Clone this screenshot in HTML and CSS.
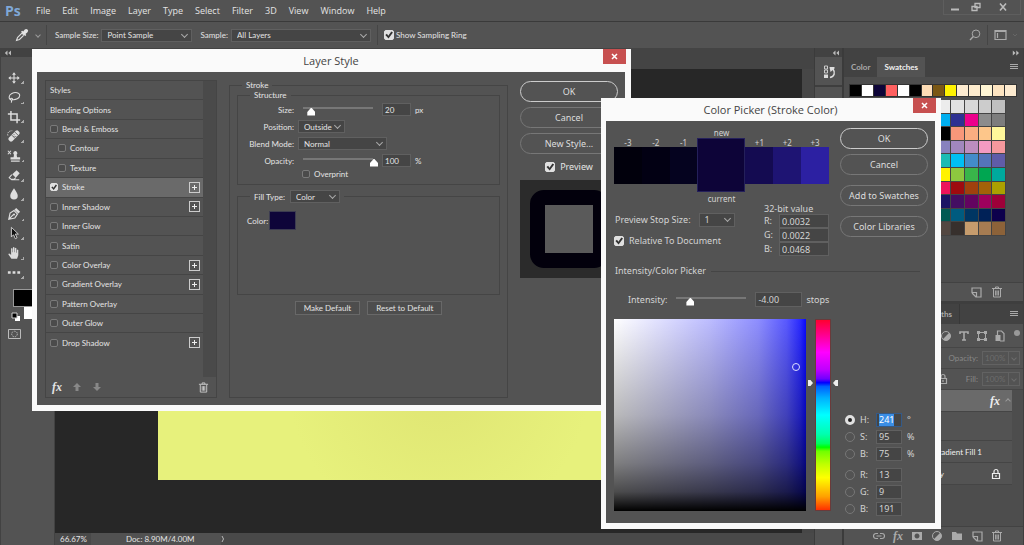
FILE: index.html
```html
<!DOCTYPE html>
<html lang="en">
<head>
  <meta charset="utf-8">
  <title>Photoshop - Layer Style</title>
  <link rel="stylesheet" href="styles.css">
</head>
<body>
  <!-- Shared icons -->
  <svg class="defs" width="0" height="0">
    <symbol id="trash" viewBox="0 0 12 12"><path d="M1 2.5h10M4.5 2.5V1h3v1.500M2.500 3v8h7V3M4.600 4.500v5M6 4.500v5M7.400 4.500v5" fill="none" stroke="currentColor"/></symbol>
    <symbol id="page" viewBox="0 0 12 12"><path d="M2 2h9v9H6.500V6.500H2zM2 7l4 4" fill="none" stroke="currentColor" stroke-width="1.200"/></symbol>
    <symbol id="menu" viewBox="0 0 10 8"><path d="M1 1.500h8M1 3.500h8M1 5.500h8" stroke="currentColor" stroke-width="1"/></symbol>
    <symbol id="lock" viewBox="0 0 12 12"><path d="M4 5.500V3.500a2 2 0 0 1 4 0v2M2.500 5.500h7v5h-7zM6 7v2" fill="none" stroke="currentColor" stroke-width="1.200"/></symbol>
    <symbol id="half" viewBox="0 0 12 12"><circle cx="6" cy="6" r="4.500" fill="none" stroke="currentColor"/><path d="M9.200 2.800A4.500 4.500 0 1 1 2.800 9.200z" fill="currentColor"/></symbol>
    <symbol id="left" viewBox="0 0 8 6"><path d="M3.500 .5v5L.8 3zM7 .5v5L4.300 3z" fill="currentColor"/></symbol>
    <symbol id="right" viewBox="0 0 8 6"><path d="M.8 .5v5L3.500 3zM4.300 .5v5L7 3z" fill="currentColor"/></symbol>
  </svg>

  <div class="app">
    <header class="menubar">
      <span class="logo">Ps</span>
      <nav class="menus">
        <a href="#">File</a>
        <a href="#">Edit</a>
        <a href="#">Image</a>
        <a href="#">Layer</a>
        <a href="#">Type</a>
        <a href="#">Select</a>
        <a href="#">Filter</a>
        <a href="#">3D</a>
        <a href="#">View</a>
        <a href="#">Window</a>
        <a href="#">Help</a>
      </nav>
      <div class="window-buttons">
        <button aria-label="Minimize"><svg width="10" height="10"><path d="M1 7.500h8" stroke="currentColor" stroke-width="2"/></svg></button>
        <button aria-label="Restore"><svg width="10" height="10"><path d="M4 1.500h5v4H4zM1 4.500h5v4H1z" fill="none" stroke="currentColor" stroke-width="1.300"/></svg></button>
        <button class="wide" aria-label="Close"><svg width="10" height="10"><path d="M2 1.500l6 7M8 1.500l-6 7" stroke="currentColor" stroke-width="1.600"/></svg></button>
      </div>
    </header>

    <div class="options">
      <svg class="eyedropper" width="14" height="14" viewBox="0 0 14 14"><path d="M1.500 12.500l1-3 4.500-4.500 2 2-4.500 4.500z" fill="none" stroke="#ddd" stroke-width="1.100"/><path d="M6 3.800l1.200-1 1 .8 1.600-2a1.900 1.900 0 0 1 2.700 2.700l-2 1.600.8 1-1 1.200z" fill="#e6e6e6"/></svg>
      <span class="chevron"></span>
      <span class="divider"></span>
      <label for="sampleSize">Sample Size:</label>
      <span class="select sample-size"><select id="sampleSize"><option>Point Sample</option></select></span>
      <label for="sample">Sample:</label>
      <span class="select sample"><select id="sample"><option>All Layers</option></select></span>
      <span class="divider"></span>
      <label class="check"><input type="checkbox" checked>Show Sampling Ring</label>
      <div class="options-right">
        <svg width="12" height="12" viewBox="0 0 12 12"><circle cx="7" cy="4.800" r="3.800" fill="none" stroke="#aaa"/><path d="M4.300 7.500L1 11" stroke="#aaa" stroke-width="1.300"/></svg>
        <span class="divider"></span>
        <svg width="24" height="12" viewBox="0 0 24 12"><path d="M1 1.500h11v9H1zM1 2.500h11M3.500 4v5" fill="none" stroke="#aaa" stroke-width="1.200"/><path d="M19 5l2 2 2-2" fill="none" stroke="#666"/></svg>
      </div>
    </div>

    <main class="workspace">
      <aside class="toolbar">
        <div class="strip"><svg width="8" height="6"><use href="#left"/></svg></div>
        <div class="tools">
          <button aria-label="Move"><svg viewBox="0 0 16 16"><path d="M8 3v10M3 8h10" stroke="currentColor" stroke-width="1.200"/><path d="M8 1.500l2.200 2.700H5.800zM8 14.500l2.200-2.700H5.800zM1.500 8l2.700-2.200v4.400zM14.500 8l-2.700-2.200v4.400z" fill="currentColor"/></svg></button>
          <button aria-label="Lasso"><svg viewBox="0 0 16 16"><path d="M5 11.500C1.500 10.500 1.500 6 5.500 4s9-1 9 2.300-4.500 5.200-8.500 4.700M4 10.500c0-1.500 2.500-1.200 2.300.3-.2 1.200-2.300 1.200-2.300-.3zM5 11.800c.5 1 .5 1.700-.3 2.700" fill="none" stroke="currentColor" stroke-width="1.200"/></svg></button>
          <button aria-label="Crop"><svg viewBox="0 0 16 16"><path d="M4.500 1v10.500H15M1 4.500h10.500V15" fill="none" stroke="currentColor" stroke-width="1.700"/></svg></button>
          <button aria-label="Healing Brush"><svg viewBox="0 0 16 16"><path d="M2 10l8-8q1.800-1 3 .3l1 1q1.200 1.200 0 2.700l-8 8q-1.500 1-2.700 0l-1.300-1.300Q.9 11.500 2 10z" fill="currentColor"/><path d="M5.500 7l4 4M9 3.500l4 4" stroke="#535353"/><path d="M8 6v1M10 8v1M7.500 8.500h1" stroke="#535353"/><path d="M1 7.500C0 4.500 2 2 6 2" fill="none" stroke="currentColor" stroke-dasharray="1.500 1.200"/></svg></button>
          <button aria-label="Clone Stamp"><svg viewBox="0 0 16 16"><path d="M7.500 9.500L8 6.500a2.300 2.300 0 1 1 3 0l.5 3H15v2.500H4V9.500zM4.500 13h10v1.500h-10z" fill="currentColor"/><path d="M1 2l3.500 4M4.500 2L1 6" stroke="currentColor" stroke-width="1.200"/></svg></button>
          <button aria-label="Eraser"><svg viewBox="0 0 16 16"><path d="M6 7l5-4.500 3.500 3.500-4.500 5z" fill="currentColor"/><path d="M5.500 7.500L2.500 11l2.500 2h3l2-2M5 13.500h9" fill="none" stroke="currentColor" stroke-width="1.200"/></svg></button>
          <button aria-label="Blur"><svg viewBox="0 0 16 16"><path d="M8 1.500c2 3.500 4.300 5.700 4.300 8.500a4.300 4.300 0 0 1-8.600 0C3.700 7.200 6 5 8 1.500z" fill="currentColor"/></svg></button>
          <button aria-label="Pen"><svg viewBox="0 0 16 16"><path d="M2 14l1.500-7L8 4l4 4-3 4.500zM2 14l5.500-5.500" fill="none" stroke="currentColor" stroke-width="1.300"/><circle cx="8" cy="8.500" r="1.200" fill="currentColor"/><path d="M8.500 3l2-2 4.500 4.500-2 2z" fill="currentColor"/></svg></button>
          <button aria-label="Path Selection"><svg viewBox="0 0 16 16"><path d="M5 1.500v11l2.500-2.500 2 4.500 2-1-2-4.300H13z" fill="#111" stroke="currentColor"/></svg></button>
          <button aria-label="Hand"><svg viewBox="0 0 16 16"><path d="M5 14.500L1.500 9.500q.5-1.500 2-.5l1.200 1.300V3q.8-1.200 1.600 0v4.200h.5V1.800q.9-1.200 1.700 0v5.400H9V2.500q.9-1.200 1.700 0v5.200h.6V4.500q.9-1 1.600 0v6l-1.400 4z" fill="currentColor"/></svg></button>
          <button aria-label="Edit Toolbar"><svg viewBox="0 0 16 16"><path d="M1 7h3.200v3H1zM6.400 7h3.200v3H6.400zM11.800 7H15v3h-3.200z" fill="currentColor"/></svg></button>
        </div>
        <div class="colors"><span class="back"></span><span class="front"></span></div>
        <svg class="mini" width="16" height="38" viewBox="0 0 16 38"><path d="M8 9h5v5H8z" fill="#fff"/><path d="M5 6h5v5H5z" fill="#000" stroke="#ccc"/><path d="M1.500 22.500h12v9h-12z" fill="none" stroke="#bbb"/><circle cx="7.500" cy="27" r="2.800" fill="none" stroke="#bbb" stroke-dasharray="1.500 1"/></svg>
      </aside>

      <section class="document">
        <div class="doc-tabs"></div>
        <div class="doc-view">
          <div class="canvas"><div class="artboard"></div></div>
          <div class="doc-scroll"></div>
        </div>
        <footer class="status">
          <span class="zoom">66.67%</span>
          <span class="doc-size">Doc: 8.90M/4.00M</span>
          <svg width="5" height="8"><path d="M1 1q3 3 0 6" fill="none" stroke="#bbb"/></svg>
        </footer>
      </section>

      <aside class="dock">
        <div class="strip"><svg width="8" height="6"><use href="#left"/></svg></div>
        <div class="dock-group">
          <button aria-label="History"><svg width="14" height="14" viewBox="0 0 14 14"><path d="M1.500 1h3v3h-3zM1.500 5h3v3h-3z" fill="none" stroke="#ccc"/><path d="M1 9.500h4V13H1z" fill="#ddd"/><path d="M7 12.500c4.500-1 5.500-5 3-8.500" fill="none" stroke="#ddd" stroke-width="1.500"/><path d="M6.500 2h5v1.500l-4 3.500z" fill="#ddd"/></svg></button>
        </div>
        <div class="dock-group"></div>
      </aside>

      <aside class="panels">
        <div class="strip end"><svg width="8" height="6"><use href="#right"/></svg></div>
        <section class="panel swatches">
          <div class="tabs">
            <button>Color</button>
            <button class="active">Swatches</button>
            <svg class="panel-menu" width="10" height="8"><use href="#menu"/></svg>
          </div>
          <div class="recent" id="recent"></div>
          <div class="swatch-grid" id="swatches"></div>
          <div class="panel-foot">
            <svg width="12" height="12"><use href="#page"/></svg>
            <svg width="12" height="12"><use href="#trash"/></svg>
          </div>
        </section>
        <section class="panel layers">
          <div class="tabs">
            <button class="paths">Paths</button>
            <svg class="panel-menu" width="10" height="8"><use href="#menu"/></svg>
          </div>
          <div class="layer-row filters">
            <svg width="12" height="12"><use href="#half"/></svg>
            <svg width="12" height="12" viewBox="0 0 12 12"><path d="M2 4V2h8v2M6 2v8M4 10h4" fill="none" stroke="currentColor" stroke-width="1.600"/></svg>
            <svg width="12" height="12" viewBox="0 0 12 12"><path d="M2.500 2.500h7v7h-7z" fill="none" stroke="currentColor"/><path d="M1 1h3v3H1zM8 1h3v3H8zM1 8h3v3H1zM8 8h3v3H8z" fill="currentColor"/></svg>
            <svg width="12" height="12" viewBox="0 0 12 12"><path d="M3.500 5V1h4L10 3.500V11H6" fill="none" stroke="currentColor" stroke-width="1.200"/><path d="M1.500 5h5v6h-5z" fill="currentColor"/></svg>
            <span class="dot"></span>
          </div>
          <div class="layer-row dim">
            <label for="layerOpacity">Opacity:</label>
            <span class="combo"><input id="layerOpacity" type="text" value="100%" disabled><span class="chevron"></span></span>
          </div>
          <div class="layer-row dim">
            <svg class="lock-icon" width="12" height="12"><use href="#lock"/></svg>
            <label for="layerFill">Fill:</label>
            <span class="combo"><input id="layerFill" type="text" value="100%" disabled><span class="chevron"></span></span>
          </div>
          <div class="layer-list">
            <div class="layer selected"><em>fx</em><span class="chevron up"></span></div>
            <div class="layer tall"></div>
            <div class="layer name"><span>Gradient Fill 1</span></div>
            <div class="layer locked"><span>Copy</span><svg width="12" height="12"><use href="#lock"/></svg></div>
          </div>
          <div class="panel-foot layer-foot">
            <svg width="12" height="12" viewBox="0 0 12 12"><path d="M5 3.500H3a2.500 2.500 0 0 0 0 5h2M7 3.500h2a2.500 2.500 0 0 1 0 5H7M3.500 6h5" fill="none" stroke="currentColor" stroke-width="1.200"/></svg>
            <em>fx</em>
            <svg width="12" height="12" viewBox="0 0 12 12"><path fill-rule="evenodd" d="M1 2h10v8H1zM6 3.500a2.500 2.500 0 1 0 .01 0z" fill="currentColor"/></svg>
            <svg width="12" height="12"><use href="#half"/></svg>
            <svg width="12" height="12" viewBox="0 0 12 12"><path d="M1 2h4l1 1.500h5V10H1z" fill="currentColor"/></svg>
            <svg width="12" height="12"><use href="#page"/></svg>
            <svg width="12" height="12"><use href="#trash"/></svg>
          </div>
        </section>
      </aside>
    </main>
  </div>

  <!-- Layer Style window -->
  <div class="window layer-style" role="dialog" aria-label="Layer Style">
    <div class="titlebar">
      <h1>Layer Style</h1>
      <button class="close" aria-label="Close"><svg width="7" height="7"><path d="M1 1l5 5M6 1L1 6" stroke="#fff" stroke-width="1.500"/></svg></button>
    </div>
    <div class="window-body style-body">
      <div class="style-panel">
        <div class="style-scroll">
          <div class="style-list">
            <div class="style-item">Styles</div>
            <div class="style-item">Blending Options</div>
            <div class="style-item"><label class="check"><input type="checkbox">Bevel &amp; Emboss</label></div>
            <div class="style-item sub"><label class="check"><input type="checkbox">Contour</label></div>
            <div class="style-item sub"><label class="check"><input type="checkbox">Texture</label></div>
            <div class="style-item selected"><label class="check"><input type="checkbox" checked>Stroke</label><button class="plus" aria-label="Add Stroke"></button></div>
            <div class="style-item"><label class="check"><input type="checkbox">Inner Shadow</label><button class="plus" aria-label="Add Inner Shadow"></button></div>
            <div class="style-item"><label class="check"><input type="checkbox">Inner Glow</label></div>
            <div class="style-item"><label class="check"><input type="checkbox">Satin</label></div>
            <div class="style-item"><label class="check"><input type="checkbox">Color Overlay</label><button class="plus" aria-label="Add Color Overlay"></button></div>
            <div class="style-item"><label class="check"><input type="checkbox">Gradient Overlay</label><button class="plus" aria-label="Add Gradient Overlay"></button></div>
            <div class="style-item"><label class="check"><input type="checkbox">Pattern Overlay</label></div>
            <div class="style-item"><label class="check"><input type="checkbox">Outer Glow</label></div>
            <div class="style-item"><label class="check"><input type="checkbox">Drop Shadow</label><button class="plus" aria-label="Add Drop Shadow"></button></div>
          </div>
        </div>
        <div class="style-foot">
          <em>fx</em>
          <svg width="10" height="10"><path d="M5 1l4 4H6.500v4h-3V5H1z" fill="#888"/></svg>
          <svg width="10" height="10"><path d="M5 9l4-4H6.500V1h-3v4H1z" fill="#888"/></svg>
          <svg class="end" width="11" height="11"><use href="#trash"/></svg>
        </div>
      </div>

      <fieldset class="stroke">
        <legend>Stroke</legend>
        <fieldset class="structure">
          <legend>Structure</legend>
          <div class="row">
            <label for="size">Size:</label>
            <input id="size" type="range" min="0" max="155" value="20">
            <input class="num" type="text" value="20" aria-label="Size value"> px
          </div>
          <div class="row">
            <label for="position">Position:</label>
            <span class="select position"><select id="position"><option>Outside</option></select></span>
          </div>
          <div class="row">
            <label for="blend">Blend Mode:</label>
            <span class="select blend"><select id="blend"><option>Normal</option></select></span>
          </div>
          <div class="row">
            <label for="opacity">Opacity:</label>
            <input id="opacity" type="range" min="0" max="100" value="100">
            <input class="num" type="text" value="100" aria-label="Opacity value"> %
          </div>
          <label class="check overprint"><input type="checkbox">Overprint</label>
        </fieldset>
        <fieldset class="fill">
          <legend><label for="fillType">Fill Type:</label> <span class="select fill-type"><select id="fillType"><option>Color</option></select></span></legend>
          <div class="fill-color">Color: <button class="color-chip" aria-label="Stroke color"></button></div>
        </fieldset>
        <div class="defaults">
          <button>Make Default</button>
          <button>Reset to Default</button>
        </div>
      </fieldset>

      <div class="style-actions">
        <button class="pill primary">OK</button>
        <button class="pill">Cancel</button>
        <button class="pill">New Style...</button>
        <label class="check big"><input type="checkbox" checked>Preview</label>
        <div class="preview"><div class="preview-ring"></div></div>
      </div>
    </div>
  </div>

  <!-- Color Picker window -->
  <div class="window color-picker" role="dialog" aria-label="Color Picker">
    <div class="titlebar">
      <h1>Color Picker (Stroke Color)</h1>
      <button class="close" aria-label="Close"><svg width="7" height="7"><path d="M1 1l5 5M6 1L1 6" stroke="#fff" stroke-width="1.500"/></svg></button>
    </div>
    <div class="window-body picker-body">
      <div class="picker-top">
        <div class="picker-preview">
          <div class="caption">new</div>
          <div class="stops">
            <div class="stop s1">-3</div>
            <div class="stop s2">-2</div>
            <div class="stop s3">-1</div>
            <div class="current"></div>
            <div class="stop s4">+1</div>
            <div class="stop s5">+2</div>
            <div class="stop s6">+3</div>
          </div>
          <div class="caption">current</div>
          <div class="picker-options">
            <div>
              <div class="stop-size">
                <label for="stopSize">Preview Stop Size:</label>
                <span class="select"><select id="stopSize"><option>1</option></select></span>
              </div>
              <label class="check big"><input type="checkbox" checked>Relative To Document</label>
            </div>
            <div class="bit-values">
              <div>32-bit value</div>
              <label>R: <input type="text" value="0.0032"></label>
              <label>G: <input type="text" value="0.0022"></label>
              <label>B: <input type="text" value="0.0468"></label>
            </div>
          </div>
        </div>
        <div class="picker-actions">
          <button class="pill primary">OK</button>
          <button class="pill">Cancel</button>
          <button class="pill spaced">Add to Swatches</button>
          <button class="pill spaced">Color Libraries</button>
        </div>
      </div>

      <div class="section-title">Intensity/Color Picker</div>
      <div class="intensity">
        <label for="intensity">Intensity:</label>
        <input id="intensity" type="range" min="-9" max="15" value="-4">
        <input class="num" type="text" value="-4.00" aria-label="Intensity value"> stops
      </div>

      <div class="picker-main">
        <div class="field"><span class="marker"></span></div>
        <div class="hue"></div>
        <div class="values">
          <div class="value"><input type="radio" name="channel" id="ch" checked><label for="ch">H:</label><input type="text" id="hueValue" value="241" aria-label="Hue"> °</div>
          <div class="value"><input type="radio" name="channel" id="cs"><label for="cs">S:</label><input type="text" value="95" aria-label="Saturation"> %</div>
          <div class="value"><input type="radio" name="channel" id="cv"><label for="cv">B:</label><input type="text" value="75" aria-label="Brightness"> %</div>
          <div class="value rgb"><input type="radio" name="channel" id="cr"><label for="cr">R:</label><input type="text" value="13" aria-label="Red"></div>
          <div class="value"><input type="radio" name="channel" id="cg"><label for="cg">G:</label><input type="text" value="9" aria-label="Green"></div>
          <div class="value"><input type="radio" name="channel" id="cb"><label for="cb">B:</label><input type="text" value="191" aria-label="Blue"></div>
        </div>
      </div>
    </div>
  </div>

  <script src="script.js"></script>
</body>
</html>
```

FILE: styles.css
```css
* {
  box-sizing: border-box;
}

body {
  margin: 0;
  background: #262626;
  color: #e4e4e4;
  font: 8px/10px Lato, "Noto Sans", sans-serif;
}

button,
input,
select {
  font: inherit;
  color: inherit;
  margin: 0;
  padding: 0;
}

button {
  background: none;
  border: none;
}

a {
  color: inherit;
  text-decoration: none;
}

svg {
  display: block;
  flex: none;
}

em {
  font: italic bold 12px/12px "Liberation Serif", serif;
}

.defs {
  position: absolute;
}

.app {
  display: flex;
  flex-direction: column;
  height: 100vh;
  overflow: hidden;
}

/* Menu bar */
.menubar {
  display: flex;
  align-items: center;
  height: 22px;
  padding: 0 3px 0 5px;
  background: #535353;
  border-bottom: 1px solid #3a3a3a;
  font: 9px/12px "Open Sans", sans-serif;
}

.logo {
  width: 31px;
  color: #7fa8d8;
  font-size: 14px;
  font-weight: bold;
}

.menus {
  display: flex;
  gap: 12px;
}

.window-buttons {
  display: flex;
  align-self: flex-start;
  margin-left: auto;
  border: 1px solid #5e5e5e;
  border-top: none;
  color: #bbb;
}

.window-buttons button {
  display: flex;
  justify-content: center;
  align-items: center;
  width: 21px;
  height: 14px;
}

.window-buttons .wide {
  width: 34px;
}

/* Form controls */
.select {
  position: relative;
  display: inline-block;
  height: 13px;
}

.select select {
  display: block;
  width: 100%;
  height: 100%;
  padding: 0 5px;
  appearance: none;
  background: #454545;
  border: 1px solid #606060;
}

.select::after {
  content: "";
  position: absolute;
  top: 3px;
  right: 5px;
  width: 4px;
  height: 4px;
  border: solid #aaa;
  border-width: 0 1px 1px 0;
  transform: rotate(45deg);
}

.chevron {
  width: 4px;
  height: 4px;
  border: solid #999;
  border-width: 0 1px 1px 0;
  transform: rotate(45deg);
}

.chevron.up {
  transform: rotate(225deg);
}

.check {
  display: flex;
  align-items: center;
  gap: 4px;
}

.check input {
  display: block;
  width: 8px;
  height: 8px;
  appearance: none;
  border: 1px solid #7a7a7a;
  border-radius: 2px;
  background: #4b4b4b;
}

.check input:checked {
  background: #e0e0e0;
  border-color: #e0e0e0;
}

.check input:checked::before {
  content: "";
  display: block;
  width: 100%;
  height: 100%;
  background: #333;
  clip-path: polygon(5% 50%, 25% 35%, 42% 58%, 80% 5%, 100% 20%, 45% 95%);
}

.check.big {
  gap: 5px;
}

.check.big input,
.options .check input {
  width: 10px;
  height: 10px;
}

input[type="text"] {
  background: #454545;
  border: 1px solid #606060;
  padding: 0 2px;
}

input[type="range"] {
  width: 80px;
  height: 12px;
  appearance: none;
  background: linear-gradient(#777, #777) 5px 3px / calc(100% - 10px) 2px no-repeat;
}

input[type="range"]::-webkit-slider-thumb {
  appearance: none;
  width: 8px;
  height: 8px;
  margin-top: 4px;
  background: #fff;
  clip-path: polygon(50% 0, 100% 55%, 100% 100%, 0 100%, 0 55%);
}

/* Options bar */
.options {
  display: flex;
  align-items: center;
  height: 26px;
  padding: 0 6px 0 15px;
  background: #535353;
}

.divider {
  width: 1px;
  height: 20px;
  background: #454545;
}

.options .chevron {
  margin: 0 6px 0 7px;
}

.options label {
  margin: 0 3px 0 8px;
}

.options .check {
  margin: 0 0 0 6px;
  gap: 2px;
}

.sample-size {
  width: 91px;
}

.sample {
  width: 140px;
  margin-right: 6px;
}

.options-right {
  display: flex;
  align-items: center;
  gap: 6px;
  margin-left: auto;
}

/* Workspace */
.workspace {
  display: flex;
  flex: 1;
  min-height: 0;
}

.strip {
  height: 9px;
  padding: 2px 3px;
  background: #424242;
  color: #bbb;
}

.strip.end {
  display: flex;
  justify-content: flex-end;
}

.toolbar {
  width: 55px;
  flex: none;
  background: #535353;
  border-left: 1px solid #424242;
  border-right: 1px solid #424242;
}

.tools {
  display: flex;
  flex-direction: column;
  width: 26px;
  height: 214px;
  margin-top: 11px;
  color: #ddd;
}

.tools button {
  flex: 1;
  display: flex;
  align-items: center;
  padding-left: 6px;
  background: linear-gradient(135deg, transparent 50%, #aaa 50%) right 3px bottom 3px / 3px 3px no-repeat;
}

.tools svg {
  width: 14px;
  height: 14px;
}

.colors {
  position: relative;
  height: 18px;
  margin: 7px 0 0 12px;
}

.colors span {
  position: absolute;
  width: 20px;
  height: 18px;
}

.colors .front {
  background: #000;
  border: 1px solid #999;
}

.colors .back {
  top: 12px;
  left: 11px;
  background: #fff;
}

.mini {
  margin: 0 0 0 6px;
}

.document {
  display: flex;
  flex-direction: column;
  flex: 1;
}

.doc-tabs {
  height: 21px;
  background: #444;
}

.doc-view {
  display: flex;
  flex: 1;
}

.canvas {
  display: flex;
  flex: 1;
  padding: 60px 104px 53px 103px;
  background: #272727;
}

.artboard {
  flex: 1;
  background: radial-gradient(circle at 52% 72%, #dfe573, #e7f17c 40%);
}

.doc-scroll {
  width: 12px;
  background: #474747;
}

.status {
  display: flex;
  align-items: center;
  height: 12px;
  padding-right: 12px;
  background: #494949;
}

.zoom {
  width: 36px;
  padding-left: 5px;
}

.doc-size {
  width: 130px;
  padding: 1px 0 1px 35px;
  background: #515151;
}

.dock {
  width: 30px;
  flex: none;
  background: #4a4a4a;
  border: solid #3b3b3b;
  border-width: 0 2px 0 1px;
}

.dock .strip {
  padding-left: 17px;
}

.dock-group {
  height: 30px;
  padding: 8px 8px 0;
  background: #535353;
  border-bottom: 2px solid #3e3e3e;
}

.dock-group + .dock-group {
  height: 100%;
}

/* Panels */
.panels {
  display: flex;
  flex-direction: column;
  width: 180px;
  flex: none;
  background: #4d4d4d;
  border-right: 1px solid #3e3e3e;
}

.tabs {
  display: flex;
  align-items: center;
  height: 20px;
  background: #424242;
  font-weight: bold;
}

.tabs button {
  height: 20px;
  padding: 0 7px;
  color: #aaa;
}

.tabs button.active {
  background: #535353;
  color: #f0f0f0;
}

.panel-menu {
  margin: 0 4px 0 auto;
  color: #aaa;
}

.swatches {
  display: flex;
  flex-direction: column;
  height: 244px;
}

.recent {
  display: flex;
  gap: 1px;
  height: 13px;
  margin: 7px 6px 3px 5px;
  padding: 1px;
  background: #333;
}

.recent span {
  flex: 1;
}

.swatch-grid {
  display: grid;
  grid-template-columns: repeat(6, 1fr);
  grid-auto-rows: 1fr;
  align-self: flex-end;
  width: 82px;
  height: 136px;
  margin-right: 17px;
}

.swatch-grid span {
  border: solid #444;
  border-width: 0 1px 1px 0;
}

.panel-foot {
  display: flex;
  justify-content: flex-end;
  align-items: center;
  gap: 9px;
  height: 19px;
  margin-top: auto;
  padding-right: 20px;
  background: #535353;
  border-top: 1px solid #424242;
  color: #aaa;
}

.layers {
  display: flex;
  flex-direction: column;
  flex: 1;
  border-top: 3px solid #3e3e3e;
}

.paths {
  width: 116px;
  border-right: 1px solid #383838;
  text-align: right;
}

.layer-row {
  display: flex;
  justify-content: flex-end;
  align-items: center;
  gap: 4px;
  height: 21px;
  padding-right: 3px;
  background: #535353;
  border-bottom: 1px solid #464646;
}

.filters {
  height: 24px;
  gap: 6px;
  color: #aaa;
}

.dot {
  width: 6px;
  height: 6px;
  margin: 0 0 6px 2px;
  border-radius: 50%;
  background: #999;
}

.dim {
  color: #888;
}

.combo {
  display: flex;
  align-items: center;
  width: 38px;
  height: 14px;
  border: 1px solid #626262;
}

.combo input[type="text"] {
  width: 26px;
  height: 12px;
  background: none;
  border: solid #626262;
  border-width: 0 1px 0 0;
  color: #6c6c6c;
}

.combo .chevron {
  margin-left: 3px;
  border-color: #6c6c6c;
}

.lock-icon {
  margin-right: 13px;
  color: #aaa;
}

.layer-list {
  margin-right: 11px;
}

.layer {
  display: flex;
  justify-content: flex-end;
  align-items: center;
  height: 22px;
  padding-right: 10px;
  background: #535353;
  border-bottom: 1px solid #454545;
  color: #eee;
}

.layer.selected {
  gap: 6px;
  padding-right: 2px;
  background: #6a6a6a;
}

.layer.tall {
  height: 29px;
}

.layer.name {
  padding-right: 30px;
}

.layer.locked {
  gap: 46px;
}

.layer-foot {
  gap: 8px;
}

/* Windows */
.window {
  position: absolute;
  padding: 0 6px 6px 5px;
  background: #fafafa;
}

.titlebar {
  display: flex;
  justify-content: center;
  height: 23px;
  color: #444;
}

.titlebar h1 {
  margin: 0;
  font: 11px/23px "Open Sans", sans-serif;
}

.close {
  position: absolute;
  top: 0;
  right: 5px;
  display: flex;
  justify-content: center;
  align-items: center;
  width: 23px;
  height: 15px;
  background: #c75050;
}

.window-body {
  background: #535353;
}

.pill {
  height: 21px;
  border: 1px solid #777;
  border-radius: 11px;
  font: 9px/12px "Noto Sans", sans-serif;
  color: #ddd;
}

.pill.primary {
  border-color: #ccc;
}

/* Layer Style */
.layer-style {
  top: 49px;
  left: 32px;
  width: 599px;
}

.style-body {
  display: grid;
  grid-template-columns: 172px 1fr 98px;
  column-gap: 12px;
  padding: 8px 7px 7px 8px;
}

.style-panel {
  display: flex;
  flex-direction: column;
  border: 1px solid #454545;
}

.style-scroll {
  flex: 1;
  padding: 0 13px 24px 0;
  background: linear-gradient(#4a4a4a, #4a4a4a) right / 13px 100% no-repeat;
}

.style-list {
  display: flex;
  flex-direction: column;
  height: 272px;
}

.style-item {
  flex: 1;
  display: flex;
  justify-content: space-between;
  align-items: center;
  padding: 0 3px 0 4px;
  border-bottom: 1px solid #454545;
}

.style-item:last-child {
  border-bottom-color: transparent;
}

.style-item.sub {
  padding-left: 12px;
}

.style-item.selected {
  background: #6a6a6a;
}

.plus {
  width: 11px;
  height: 11px;
  border: 1px solid #ccc;
  background:
    linear-gradient(#eee, #eee) center / 5px 1px no-repeat,
    linear-gradient(#eee, #eee) center / 1px 5px no-repeat;
}

.style-foot {
  display: flex;
  align-items: center;
  gap: 10px;
  height: 20px;
  padding: 0 7px 0 6px;
}

.style-foot .end {
  margin-left: auto;
  color: #ccc;
}

fieldset {
  min-width: 0;
  margin: 0;
  padding: 0;
  border: 1px solid #454545;
}

legend {
  margin-left: 12px;
  padding: 0 4px;
}

.stroke {
  padding: 0 7px;
}

.stroke > legend {
  margin-left: 5px;
}

.structure {
  padding: 1px 0 5px;
}

.row {
  display: flex;
  align-items: center;
  gap: 4px;
  height: 17px;
}

.row label {
  width: 56px;
  text-align: right;
}

.num {
  width: 29px;
  height: 13px;
}

.position {
  width: 47px;
}

.blend {
  width: 89px;
}

.overprint {
  margin-left: 64px;
  height: 10px;
}

.fill {
  height: 105px;
  margin-top: 5px;
}

.fill legend {
  display: flex;
  align-items: center;
  gap: 5px;
}

.fill-type {
  width: 50px;
}

.fill-color {
  display: flex;
  align-items: center;
  gap: 1px;
  margin: 8px 0 0 9px;
}

.color-chip {
  width: 27px;
  height: 19px;
  background: #0e0539;
  border: 1px solid #3c3c50;
}

.defaults {
  display: flex;
  justify-content: center;
  gap: 7px;
  margin-top: 6px;
}

.defaults button {
  height: 14px;
  padding: 0 8px;
  border: 1px solid #686868;
  background: #4d4d4d;
}

.style-actions {
  display: flex;
  flex-direction: column;
  gap: 5px;
  padding-top: 1px;
}

.check.big {
  font: 9px/12px "Noto Sans", sans-serif;
}

.style-actions .check {
  justify-content: center;
  padding: 2px 0;
}

.preview {
  height: 98px;
  padding: 10px;
  background: #2b2b2b;
}

.preview-ring {
  height: 78px;
  background: #5a5a5a;
  border: 15px solid #02000c;
  border-radius: 14px;
}

/* Color Picker */
.color-picker {
  top: 98px;
  left: 601px;
  width: 340px;
}

.picker-body {
  padding: 7px 7px 6px 8px;
  font: 9px/10px "Noto Sans", sans-serif;
  color: #d4d4d4;
}

.picker-top {
  display: flex;
  justify-content: space-between;
}

.picker-preview {
  width: 215px;
}

.caption {
  height: 10px;
  font-size: 8px;
  text-align: center;
}

.stops {
  display: flex;
  height: 54px;
  margin-bottom: 2px;
}

.stop {
  flex: 1;
  display: flex;
  flex-direction: column;
  align-items: center;
  height: 46px;
  font-size: 8px;
  line-height: 9px;
}

.stop::after {
  content: "";
  width: 100%;
  flex: 1;
  background: #01000c;
}

.s2::after { background: #020013; }
.s3::after { background: #05031f; }
.s4::after { background: #140b51; }
.s5::after { background: #1e1473; }
.s6::after { background: #2c20a2; }

.current {
  width: 48px;
  background: #0d0438;
  border: 1px solid #24205a;
}

.picker-options {
  display: flex;
  justify-content: space-between;
}

.stop-size {
  display: flex;
  align-items: center;
  gap: 8px;
  padding: 9px 0 8px 1px;
}

.stop-size .select {
  width: 36px;
  height: 14px;
}

.bit-values {
  width: 65px;
}

.bit-values label {
  display: flex;
  justify-content: space-between;
  align-items: center;
}

.bit-values input {
  width: 50px;
  height: 14px;
}

.picker-actions {
  display: flex;
  flex-direction: column;
  gap: 5px;
  width: 88px;
}

.pill.spaced {
  margin-top: 5px;
}

.section-title {
  display: flex;
  align-items: center;
  gap: 5px;
  margin: 10px 8px 0 1px;
}

.section-title::after {
  content: "";
  flex: 1;
  height: 1px;
  background: #454545;
}

.intensity {
  display: flex;
  align-items: center;
  gap: 4px;
  margin-top: 16px;
  padding-left: 14px;
}

.intensity .num {
  width: 47px;
  height: 15px;
}

.picker-main {
  display: flex;
  margin-top: 12px;
}

.field {
  position: relative;
  width: 192px;
  height: 192px;
  margin-bottom: 6px;
  background:
    linear-gradient(rgba(0, 0, 0, 0), rgba(0, 0, 0, 0.27) 50%, rgba(0, 0, 0, 0.5) 75%, rgba(0, 0, 0, 0.7) 90%, #000),
    linear-gradient(to right, #fff, #dedeff 25%, #bcbcff 50%, #8e8eff 75%, #5858ff 90%, #2a2aff 97%, #0808ff);
}

.marker {
  position: absolute;
  top: 44px;
  left: 178px;
  width: 8px;
  height: 8px;
  border: 1px solid #ddf;
  border-radius: 50%;
}

.hue {
  position: relative;
  width: 16px;
  height: 192px;
  margin: 0 14px 0 9px;
  border: 1px solid #6b3a3a;
  background: linear-gradient(#ff0030, #ff0090 8%, #f0f 17%, #c000ff 26%, #7000ff 31%, #00f 33%, #0060ff 35%, #00b0ff 41%, #0ff 50%, #00ffb0 60%, #00ff60 65%, #0f0 67%, #70ff00 69%, #c0ff00 76%, #ff0 83%, #ffa000 93%, #ff3000);
}

/* Hue slider arrows */
.hue::before,
.hue::after {
  content: "";
  position: absolute;
  top: 60px;
  left: -8px;
  width: 5px;
  height: 6px;
  background: #eee;
  clip-path: polygon(0 0, 50% 0, 100% 50%, 50% 100%, 0 100%);
}

.hue::after {
  left: 17px;
  transform: scaleX(-1);
}

.values {
  align-self: flex-end;
}

.value {
  display: flex;
  align-items: center;
  gap: 5px;
  height: 17px;
}

.value.rgb {
  margin-top: 4px;
}

.value label {
  width: 11px;
}

.value input[type="text"] {
  width: 26px;
  height: 14px;
}

.value input[type="radio"] {
  width: 10px;
  height: 10px;
  appearance: none;
  border: 1px solid #777;
  border-radius: 50%;
}

.value input[type="radio"]:checked {
  background: #222;
  border: 3px solid #e0e0e0;
}

.value #hueValue {
  border-color: #345a88;
  outline: none;
}

::selection {
  background: #3a8ee6;
  color: #fff;
}
```

FILE: script.js
```javascript
const recent = ['#000', '#fff', '#0d0438', '#ff6060', '#fff', '#000', '#fddcb5', '#7a5714', '#fff200', '#fdebd0', '#fdebcd', '#fff5d3', '#fde4c0', '#fdebd0'];

const swatches = [
  '#f0f0f0', '#ececec', '#e2e2e2', '#d8d8d8', '#cccccc', '#c0c0c0',
  '#00a651', '#00aeef', '#2e3192', '#ec008c', '#8c8c8c', '#7d7d7d',
  '#333333', '#000000', '#f7977a', '#f9ad81', '#fdc68a', '#fff79a',
  '#8493ca', '#8882be', '#a187be', '#bc8dbf', '#f49ac2', '#f6989d',
  '#3bb878', '#1bbbb4', '#00bff3', '#438cca', '#5574b9', '#605ca8',
  '#f7941d', '#fff200', '#8dc73f', '#39b54a', '#00a651', '#00a99d',
  '#ed145b', '#ed145b', '#9e0b0f', '#a0410d', '#a36209', '#aba000',
  '#002157', '#1b1464', '#440e62', '#630460', '#9e005d', '#9e0039',
  '#005826', '#005952', '#005b7f', '#003663', '#002157', '#0d004c',
  '#736357', '#534741', '#37302d', '#c69c6d', '#a67c52', '#8c6239'
];

function fill(id, colors) {
  const box = document.getElementById(id);
  colors.forEach(color => {
    const cell = document.createElement('span');
    cell.style.background = color;
    box.appendChild(cell);
  });
}

fill('recent', recent);
fill('swatches', swatches);

// Hue is the active channel, so its value starts selected
document.getElementById('hueValue').select();
```
